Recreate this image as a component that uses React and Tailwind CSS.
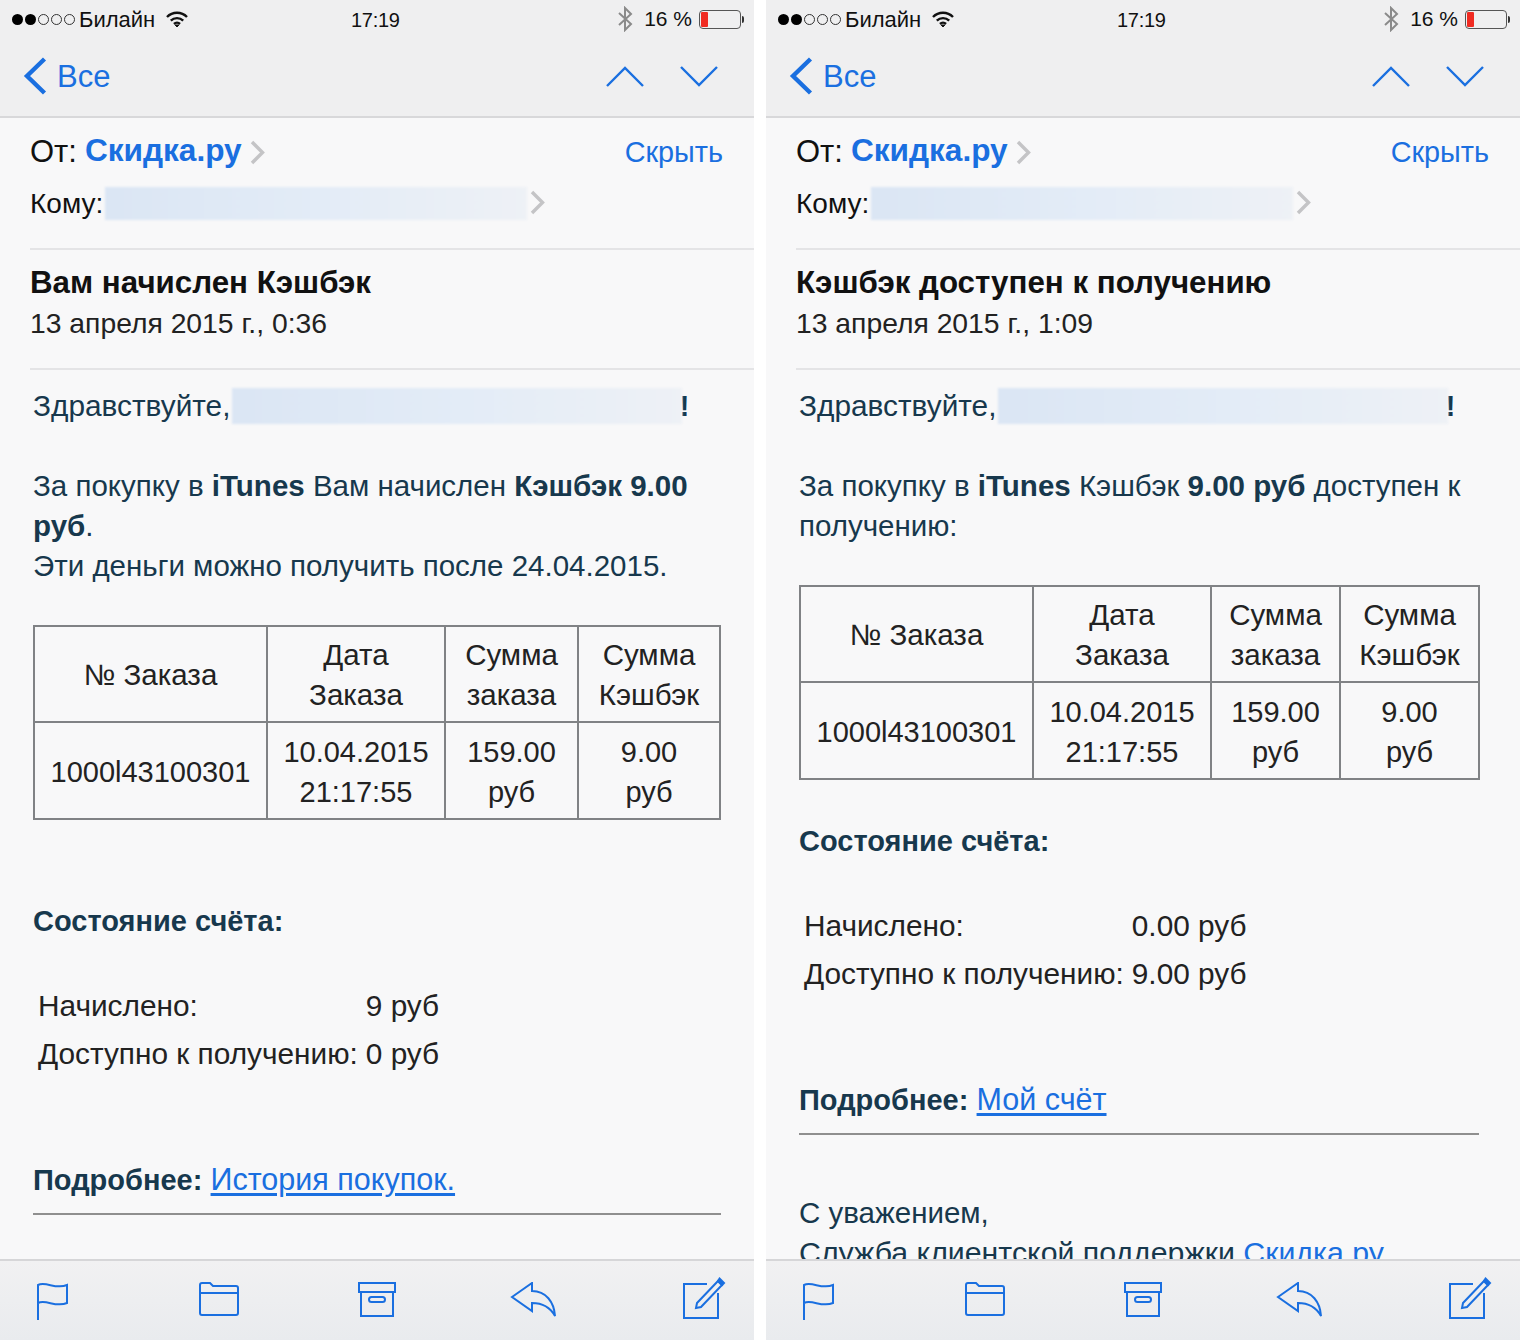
const BLUE = '#1a6fe0';

const mails = [
  {
    subject: 'Вам начислен Кэшбэк',
    date: '13 апреля 2015 г., 0:36',
    intro: (
      <>
        За покупку в <b>iTunes</b> Вам начислен <b>Кэшбэк 9.00 руб</b>.
        <br />
        Эти деньги можно получить после 24.04.2015.
      </>
    ),
    colWidths: ['w-[233px]', 'w-[178px]', 'w-[133px]', 'w-[142px]'],
    tableWidth: 'w-[686px]',
    ruleWidth: 'w-[688px]',
    stateGap: 'mt-[81px]',
    accrued: '9 руб',
    available: '0 руб',
    linkLabel: 'История покупок.',
  },
  {
    subject: 'Кэшбэк доступен к получению',
    date: '13 апреля 2015 г., 1:09',
    intro: (
      <>
        За покупку в <b>iTunes</b> Кэшбэк <b>9.00 руб</b> доступен к получению:
      </>
    ),
    colWidths: ['w-[233px]', 'w-[178px]', 'w-[129px]', 'w-[139px]'],
    tableWidth: 'w-[680px]',
    ruleWidth: 'w-[680px]',
    stateGap: 'mt-[41px]',
    accrued: '0.00 руб',
    available: '9.00 руб',
    linkLabel: 'Мой счёт',
    signature: true,
  },
];

function StatusBar() {
  return (
    <div className="relative flex h-[38px] items-center pl-[12px] pr-[10px] text-[21px] text-[#111]">
      <div className="flex items-center gap-[2px]">
        {[0, 1].map((i) => (
          <span key={i} className="h-[11px] w-[11px] rounded-full bg-black" />
        ))}
        {[0, 1, 2].map((i) => (
          <span key={i} className="h-[11px] w-[11px] rounded-full border border-[#333]" />
        ))}
      </div>
      <span className="ml-[4px] text-[22px]">Билайн</span>
      <svg width="22" height="17" viewBox="0 0 22 17" className="ml-[11px]" fill="none" stroke="#111" strokeWidth="2.4">
        <path d="M1 6 A14 14 0 0 1 21 6" />
        <path d="M4.8 9.6 A9 9 0 0 1 17.2 9.6" />
        <path d="M8 13 A4.4 4.4 0 0 1 14 13" />
        <path d="M9.2 14 L11 16 L12.8 14 Z" fill="#111" strokeWidth="1" />
      </svg>
      <span className="absolute left-[351px] top-[5px] text-[20px] tracking-[-0.3px]">17:19</span>
      <svg width="16" height="26" viewBox="0 0 16 26" className="ml-auto" fill="none" stroke="#8a8a8a" strokeWidth="2">
        <path d="M2 7 L14 18 L8 24 V2 L14 8 L2 19" />
      </svg>
      <span className="ml-[11px]">16 %</span>
      <div className="relative ml-[7px] mr-[3px] flex h-[19px] w-[42px] rounded-[4px] border border-[#555] p-[1px]">
        <span className="h-full w-[7px] rounded-[1px] bg-[#f02b22]" />
        <span className="absolute -right-[4px] top-[5px] h-[7px] w-[2px] rounded-r-sm bg-[#333]" />
      </div>
    </div>
  );
}

function NavBar() {
  return (
    <div className="flex flex-1 items-center pb-[2px] pl-[23px] pr-[36px]">
      <svg width="24" height="38" viewBox="0 0 24 38" fill="none" stroke={BLUE} strokeWidth="4.4">
        <path d="M21.5 2 L4 19 L21.5 36" />
      </svg>
      <span className="ml-[10px] mt-[2px] text-[31px] text-[#1a6fe0]">Все</span>
      <svg width="38" height="21" viewBox="0 0 38 21" className="ml-auto" fill="none" stroke={BLUE} strokeWidth="2.4">
        <path d="M1 20 L19 2 L37 20" />
      </svg>
      <svg width="38" height="21" viewBox="0 0 38 21" className="ml-[36px]" fill="none" stroke={BLUE} strokeWidth="2.4">
        <path d="M1 1 L19 19 L37 1" />
      </svg>
    </div>
  );
}

function Chevron() {
  return (
    <svg width="15" height="25" viewBox="0 0 15 25" fill="none" stroke="#c4c4c6" strokeWidth="3.4">
      <path d="M2 2 L12.5 12.5 L2 23" />
    </svg>
  );
}

function Redacted({ className }) {
  return <span className={`inline-block bg-gradient-to-r from-[#dbe6f4] via-[#e3ecf7] to-[#eef1f6] blur-[1px] ${className}`} />;
}

function MetaHeader({ mail }) {
  return (
    <div className="ml-[30px] shrink-0">
      <div className="border-b-2 border-[#e4e4e6] pr-[31px]">
        <div className="flex h-[68px] items-center pt-[1px] text-[31px]">
          <span className="text-[#111]">От:</span>
          <b className="-mt-[3px] ml-[8px] text-[31.6px] text-[#1a6fe0]">Скидка.ру</b>
          <span className="ml-[8px] flex"><Chevron /></span>
          <span className="ml-auto text-[28.8px] text-[#1a6fe0]">Скрыть</span>
        </div>
        <div className="flex h-[62px] items-start text-[28px] text-[#111]">
          <span className="-mt-[3px]">Кому:</span>
          <Redacted className="ml-[2px] mt-[1px] h-[33px] w-[422px]" />
          <span className="ml-[3px] mt-[4px] flex"><Chevron /></span>
        </div>
      </div>
      <div className="border-b-2 border-[#e4e4e6] pb-[25px] pt-[13px]">
        <div className="h-[40px] text-[31.3px] font-bold leading-[40px] text-[#111]">{mail.subject}</div>
        <div className="h-[40px] text-[28.3px] leading-[40px] text-[#222]">{mail.date}</div>
      </div>
    </div>
  );
}

function OrderTable({ mail }) {
  const cell = 'border-2 border-[#808285] pt-[2px] text-center align-middle font-normal';
  return (
    <table className={`mt-[39px] table-fixed border-collapse text-[#222] ${mail.tableWidth}`}>
      <colgroup>
        {mail.colWidths.map((w) => (
          <col key={w} className={w} />
        ))}
      </colgroup>
      <thead>
        <tr className="h-[96px] text-[29.5px] leading-[40px]">
          <th className={cell}>№ Заказа</th>
          <th className={cell}>Дата<br />Заказа</th>
          <th className={cell}>Сумма<br />заказа</th>
          <th className={cell}>Сумма<br />Кэшбэк</th>
        </tr>
      </thead>
      <tbody>
        <tr className="h-[97px] text-[29px] leading-[40px]">
          <td className={cell}>1000l43100301</td>
          <td className={cell}>10.04.2015<br />21:17:55</td>
          <td className={cell}>159.00<br />руб</td>
          <td className={cell}>9.00<br />руб</td>
        </tr>
      </tbody>
    </table>
  );
}

function MailBody({ mail }) {
  return (
    <div className="flex-1 overflow-hidden pl-[33px] pr-[33px] pt-[16px] text-[29.5px] leading-[40px] text-[#17384d]">
      <div className="flex h-[40px] items-center text-[29.8px]">
        <span>Здравствуйте,</span>
        <Redacted className="ml-[2px] h-[36px] w-[450px]" />
        <b className="-ml-[3px]">!</b>
      </div>
      <div className="mt-[40px]">{mail.intro}</div>
      <OrderTable mail={mail} />
      <div className={`text-[29px] font-bold ${mail.stateGap}`}>Состояние счёта:</div>
      <div className="ml-[5px] mt-[41px] grid w-fit grid-cols-[auto_auto] gap-x-[8px] text-[29.8px] leading-[48px] text-[#222]">
        <span>Начислено:</span>
        <span>{mail.accrued}</span>
        <span>Доступно к получению:</span>
        <span>{mail.available}</span>
      </div>
      <div className="mt-[81px]">
        <b className="text-[29px]">Подробнее:</b>{' '}
        <a className="text-[30.5px] text-[#1a6fe0] underline underline-offset-[3px]">{mail.linkLabel}</a>
      </div>
      <div className={`mt-[13px] h-[2px] bg-[#8f8f8f] ${mail.ruleWidth}`} />
      {mail.signature && (
        <div className="mt-[58px]">
          С уважением,
          <br />
          <span className="text-[30.3px]">
            Служба клиентской поддержки <a className="text-[#1a6fe0]">Скидка.ру</a>
          </span>
        </div>
      )}
    </div>
  );
}

function Toolbar() {
  return (
    <div className="flex h-[81px] shrink-0 items-start border-t-2 border-[#d6d6d8] bg-gradient-to-b from-[#f1f1f2] to-[#e9ebee] pl-[36px] pt-[21px]">
      {/* flag */}
      <svg width="32" height="38" viewBox="0 0 32 38" fill="none" stroke={BLUE} strokeWidth="2">
        <path d="M2 38 V3 C10 -1 20 8 31 3 V21 C20 26 10 17 2 21" />
      </svg>
      {/* folder */}
      <svg width="40" height="34" viewBox="0 0 40 34" className="ml-[131px]" fill="none" stroke={BLUE} strokeWidth="2">
        <path d="M1 10 V3 Q1 1 3 1 H11 L14 4 H37 Q39 4 39 6 V31 Q39 33 37 33 H3 Q1 33 1 31 Z" />
        <path d="M1 11 H39" />
      </svg>
      {/* archive */}
      <svg width="38" height="35" viewBox="0 0 38 35" className="ml-[119px]" fill="none" stroke={BLUE} strokeWidth="2">
        <path d="M1 1 H37 V10 H1 Z" />
        <path d="M3 10 V34 H35 V10" />
        <rect x="11" y="15" width="16" height="5" rx="2.5" />
      </svg>
      {/* reply */}
      <svg width="47" height="36" viewBox="0 0 47 36" className="ml-[114px]" fill="none" stroke={BLUE} strokeWidth="2">
        <path d="M2 15 L22 1 V9 C36 9 44 20 45 34 C40 25 32 21 22 21 V29 Z" />
      </svg>
      {/* compose */}
      <svg width="44" height="44" viewBox="0 0 44 44" className="ml-[125px] -mt-[6px]" fill="none" stroke={BLUE} strokeWidth="2">
        <path d="M25 8 H2 V42 H36 V17" />
        <path d="M15 27 L36 5 L40 9 L19 31 L14 32 Z" />
        <path d="M37.5 2.5 L42 7 L40 9 L36 5 Z" fill={BLUE} />
      </svg>
    </div>
  );
}

function Phone({ mail }) {
  return (
    <div className="flex h-[1340px] w-[754px] shrink-0 flex-col overflow-hidden bg-[#f8f8f9]">
      <div className="flex h-[118px] shrink-0 flex-col border-b-2 border-[#d8d8da] bg-[#efeff0]">
        <StatusBar />
        <NavBar />
      </div>
      <MetaHeader mail={mail} />
      <MailBody mail={mail} />
      <Toolbar />
    </div>
  );
}

export default function App() {
  return (
    <div className="flex h-[1340px] w-[1520px] justify-between overflow-hidden bg-white font-['Liberation_Sans',Arial,sans-serif]">
      {mails.map((mail) => (
        <Phone key={mail.subject} mail={mail} />
      ))}
    </div>
  );
}
